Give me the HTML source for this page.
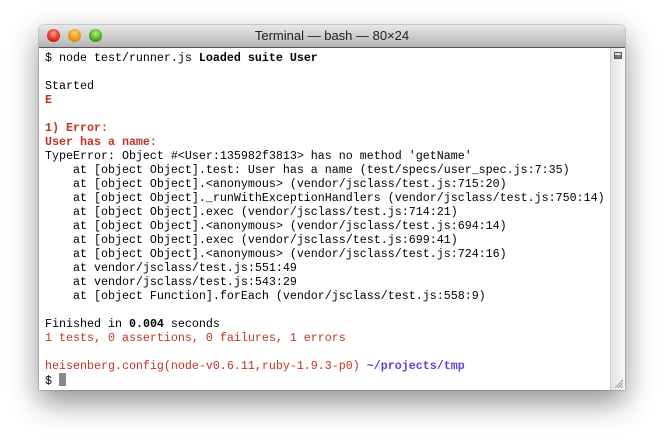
<!DOCTYPE html>
<html><head><style>
html,body{margin:0;padding:0;background:#fff;width:665px;height:446px;overflow:hidden}
.win{position:absolute;left:39px;top:25px;width:586px;height:365px;border-radius:5px 5px 0 0;box-shadow:0 12px 30px rgba(0,0,0,.45),0 0 0 1px rgba(0,0,0,.15);background:#fff;overflow:hidden}
.title{height:22px;background:linear-gradient(#e8e8e8,#b5b5b5);border-bottom:1px solid #555;position:relative;font:13px "Liberation Sans",sans-serif;color:#222;text-align:center;line-height:22px}
.b{position:absolute;top:4px;width:13px;height:13px;border-radius:50%}
.content{position:absolute;left:0;top:23px;width:572px;bottom:0;padding:3px 0 0 6px;box-sizing:border-box;font:11.67px/14px "Liberation Mono",monospace;color:#000;white-space:pre}
.sb{position:absolute;right:0;top:23px;width:14px;bottom:0;background:linear-gradient(90deg,#e4e4e4,#f8f8f8);border-left:1px solid #ccc}
.r{color:#c33420}.bd{font-weight:bold}.p{color:#5b3fe0;font-weight:bold}
.cur{display:inline-block;width:7px;height:13px;background:#888;vertical-align:-2px}
</style></head><body>
<div class="win">
<div class="title">
<div class="b" style="left:8px;background:radial-gradient(circle at 50% 35%,#ff9a8a,#d81a0a 70%);"></div>
<div class="b" style="left:29px;background:radial-gradient(circle at 50% 35%,#ffd27a,#e08a00 70%);"></div>
<div class="b" style="left:50px;background:radial-gradient(circle at 50% 35%,#b6f08a,#3a9a10 70%);"></div>
Terminal — bash — 80×24</div>
<div class="content">$ node test/runner.js <b>Loaded suite User</b>

Started
<span class="r bd">E</span>

<span class="r bd">1) Error:</span>
<span class="r bd">User has a name:</span>
TypeError: Object #&lt;User:135982f3813&gt; has no method 'getName'
    at [object Object].test: User has a name (test/specs/user_spec.js:7:35)
    at [object Object].&lt;anonymous&gt; (vendor/jsclass/test.js:715:20)
    at [object Object]._runWithExceptionHandlers (vendor/jsclass/test.js:750:14)
    at [object Object].exec (vendor/jsclass/test.js:714:21)
    at [object Object].&lt;anonymous&gt; (vendor/jsclass/test.js:694:14)
    at [object Object].exec (vendor/jsclass/test.js:699:41)
    at [object Object].&lt;anonymous&gt; (vendor/jsclass/test.js:724:16)
    at vendor/jsclass/test.js:551:49
    at vendor/jsclass/test.js:543:29
    at [object Function].forEach (vendor/jsclass/test.js:558:9)

Finished in <b>0.004</b> seconds
<span class="r">1 tests, 0 assertions, 0 failures, 1 errors</span>

<span class="r">heisenberg.config(node-v0.6.11,ruby-1.9.3-p0)</span> <span class="p">~/projects/tmp</span>
$ <span class="cur"></span></div>
<div class="sb"><div style="position:absolute;left:3px;top:4px;width:8px;height:7px;background:#777;border:1px solid #555;box-sizing:border-box;box-shadow:inset 0 2px 0 #ddd"></div>
<svg style="position:absolute;right:1px;bottom:1px" width="12" height="12"><path d="M11 3L3 11M11 6L6 11M11 9L9 11" stroke="#999" stroke-width="1"/></svg></div>
</div>
</body></html>
